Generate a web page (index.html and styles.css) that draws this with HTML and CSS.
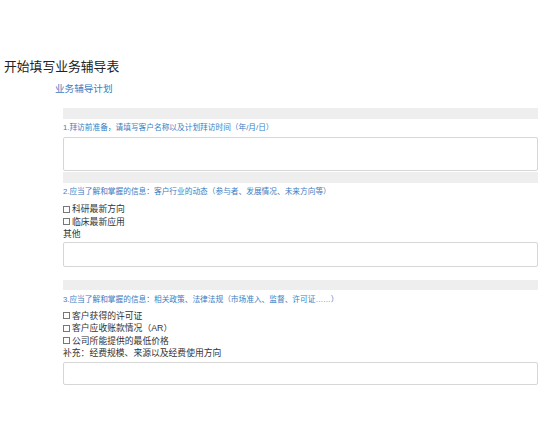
FILE: index.html
```html
<!DOCTYPE html>
<html lang="zh-CN">
<head>
<meta charset="utf-8">
<title>开始填写业务辅导表</title>
<link rel="stylesheet" href="styles.css">
</head>
<body>
<h1 class="title">开始填写业务辅导表</h1>
<div class="subtitle">业务辅导计划</div>
<div class="form">
  <div class="bar"></div>
  <div class="q">1.拜访前准备，请填写客户名称以及计划拜访时间（年/月/日）</div>
  <textarea class="ta ta1"></textarea>
  <div class="bar bar-tight"></div>
  <div class="q">2.应当了解和掌握的信息：客户行业的动态（参与者、发展情况、未来方向等）</div>
  <div class="opts">
    <div class="opt"><span class="box"></span>科研最新方向</div>
    <div class="opt"><span class="box"></span>临床最新应用</div>
    <div class="opt">其他</div>
  </div>
  <textarea class="ta ta2"></textarea>
  <div class="bar bar-sep"></div>
  <div class="q q3">3.应当了解和掌握的信息：相关政策、法律法规（市场准入、监督、许可证……）</div>
  <div class="opts opts3">
    <div class="opt"><span class="box"></span>客户获得的许可证</div>
    <div class="opt"><span class="box"></span>客户应收账款情况（AR）</div>
    <div class="opt"><span class="box"></span>公司所能提供的最低价格</div>
    <div class="opt">补充：经费规模、来源以及经费使用方向</div>
  </div>
  <textarea class="ta ta3"></textarea>
</div>
</body>
</html>
```
FILE: styles.css
```css
html, body {
  margin: 0;
  padding: 0;
  background: #ffffff;
}
body {
  font-family: "Liberation Sans", "Noto Sans CJK SC", sans-serif;
  color: #333333;
  padding-top: 59px;
}
.title {
  margin: 0;
  padding-left: 4px;
  font-size: 12.8px;
  line-height: 16px;
  font-weight: normal;
  color: #222222;
}
.subtitle {
  margin-top: 7px;
  padding-left: 55px;
  font-size: 9.6px;
  line-height: 14px;
  color: #3a7dc2;
}
.form {
  margin-left: 63px;
  width: 475px;
  display: flex;
  flex-direction: column;
}
.bar {
  height: 11px;
  background: #eeeeee;
  margin-top: 12px;
}
.bar-tight {
  margin-top: 1px;
}
.bar-sep {
  margin-top: 13px;
  height: 10px;
}
.q {
  margin-top: 3px;
  font-size: 7.7px;
  line-height: 12px;
  color: #3a7dc2;
}
.q3 {
  margin-top: 4px;
}
.opts {
  margin-top: 5px;
  font-size: 8.8px;
  line-height: 12.5px;
  color: #333333;
}
.opts3 {
  margin-top: 4px;
}
.opt {
  display: flex;
  align-items: center;
}
.box {
  display: inline-block;
  width: 7px;
  height: 7px;
  border: 1px solid #777777;
  box-sizing: border-box;
  margin-right: 2px;
}
.ta {
  display: block;
  box-sizing: border-box;
  width: 475px;
  border: 1px solid #d6d6d6;
  border-radius: 2px;
  resize: none;
  margin: 0;
  padding: 0;
  background: #ffffff;
  font-family: inherit;
}
.ta1 {
  margin-top: 3px;
  height: 34px;
}
.ta2 {
  margin-top: 1px;
  height: 25px;
}
.ta3 {
  margin-top: 2px;
  height: 23px;
}
```
